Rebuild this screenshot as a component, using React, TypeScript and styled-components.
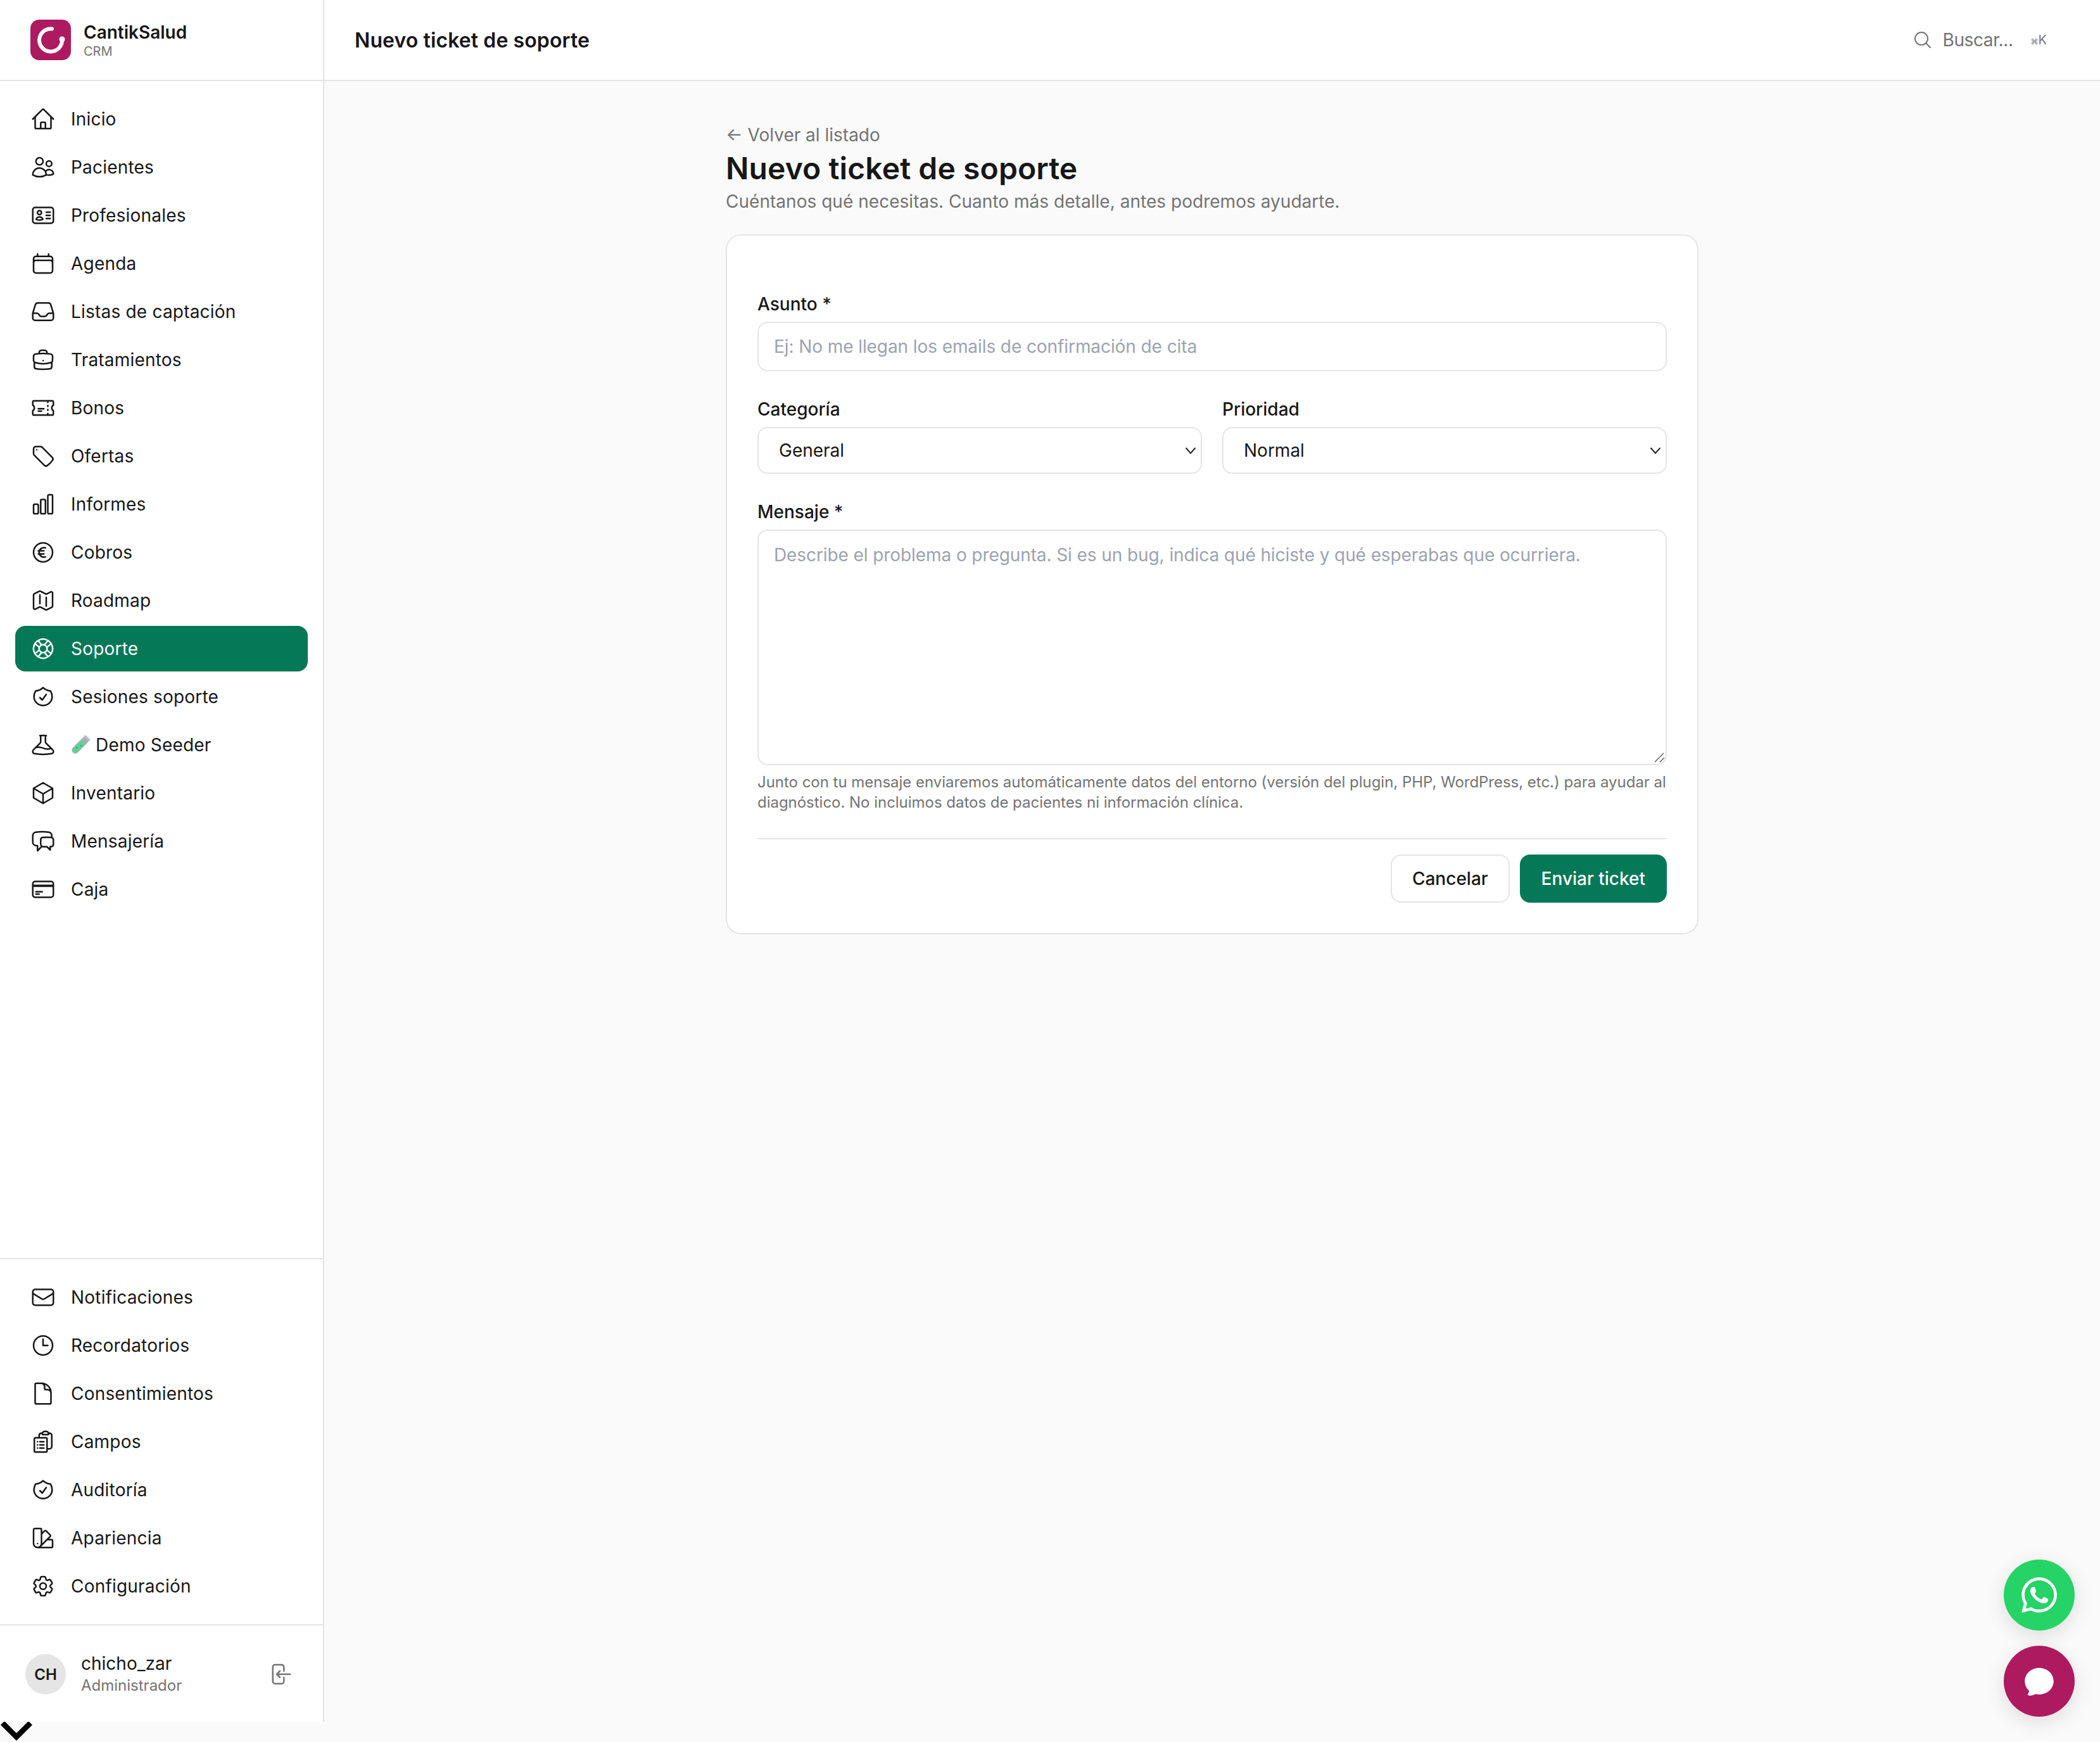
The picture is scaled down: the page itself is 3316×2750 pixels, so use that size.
import React from 'react';
import styled, { createGlobalStyle } from 'styled-components';
import {
  HiOutlineHome, HiOutlineUsers, HiOutlineIdentification, HiOutlineCalendar, HiOutlineInbox,
  HiOutlineBriefcase, HiOutlineTicket, HiOutlineTag, HiOutlineChartBar, HiOutlineCurrencyEuro,
  HiOutlineMap, HiOutlineLifebuoy, HiOutlineBeaker, HiOutlineCube,
  HiOutlineChatBubbleLeftRight, HiOutlineCreditCard, HiOutlineEnvelope, HiOutlineClock,
  HiOutlineDocument, HiOutlineClipboardDocumentList, HiOutlineSwatch, HiOutlineCog6Tooth,
  HiOutlineArrowLeftOnRectangle, HiOutlineMagnifyingGlass, HiChatBubbleOvalLeft,
} from 'react-icons/hi2';
import { FaWhatsapp } from 'react-icons/fa';

const GlobalStyle = createGlobalStyle`
  html, body { margin: 0; padding: 0; background: #fafafa; }
  * { box-sizing: border-box; }
  body { font-family: Inter, "Liberation Sans", sans-serif; color: #171717; }
`;

const Page = styled.div`
  width: 3316px;
  height: 2750px;
  overflow: hidden;
  display: flex;
  flex-direction: column;
`;

const Shell = styled.div`
  height: 2718px;
  display: flex;
`;

const BottomStrip = styled.div`
  height: 32px;
  display: flex;
  align-items: flex-start;
  svg { display: block; }
`;

const Sidebar = styled.aside`
  width: 512px;
  flex: none;
  display: flex;
  flex-direction: column;
  background: #fff;
  border-right: 2px solid #e5e5e5;
`;

const Brand = styled.div`
  height: 128px;
  flex: none;
  display: flex;
  align-items: center;
  gap: 20px;
  padding: 0 48px;
  border-bottom: 2px solid #e5e5e5;
`;

const BrandText = styled.div`
  display: flex;
  flex-direction: column;
`;

const BrandName = styled.span`
  font-size: 28px;
  line-height: 36px;
  font-weight: 600;
`;

const BrandSub = styled.span`
  font-size: 20px;
  line-height: 24px;
  color: #737373;
`;

const Nav = styled.nav<{ $grow?: boolean }>`
  display: flex;
  flex-direction: column;
  gap: 4px;
  padding: 24px;
  flex: ${({ $grow }) => ($grow ? 1 : 'none')};
`;

const SecondaryNav = styled(Nav)`
  border-top: 2px solid #e5e5e5;
`;

const NavItem = styled.a<{ $active?: boolean }>`
  height: 72px;
  display: flex;
  align-items: center;
  gap: 24px;
  padding: 0 24px;
  border-radius: 16px;
  font-size: 28px;
  letter-spacing: 0.2px;
  color: ${({ $active }) => ($active ? '#fff' : '#171717')};
  background: ${({ $active }) => ($active ? '#047857' : 'transparent')};
  svg { flex: none; }
`;

const NavLabel = styled.span`
  display: flex;
  align-items: center;
  gap: 9px;
`;

const UserBox = styled.div`
  flex: none;
  display: flex;
  align-items: center;
  gap: 24px;
  padding: 42px 48px 40px 40px;
  border-top: 2px solid #e5e5e5;
`;

const Avatar = styled.div`
  width: 64px;
  height: 64px;
  flex: none;
  border-radius: 50%;
  background: #e5e5e5;
  display: flex;
  align-items: center;
  justify-content: center;
  font-size: 24px;
  font-weight: 600;
`;

const UserInfo = styled.div`
  flex: 1;
  display: flex;
  flex-direction: column;
`;

const UserName = styled.span`
  font-size: 28px;
  line-height: 36px;
`;

const UserRole = styled.span`
  font-size: 24px;
  line-height: 34px;
  color: #737373;
`;

const LogoutButton = styled.button`
  border: none;
  background: none;
  padding: 0;
  color: #737373;
  display: flex;
`;

const Main = styled.main`
  flex: 1;
  display: flex;
  flex-direction: column;
  min-width: 0;
`;

const TopBar = styled.header`
  height: 128px;
  flex: none;
  display: flex;
  align-items: center;
  justify-content: space-between;
  padding: 0 84px 0 48px;
  background: #fff;
  border-bottom: 2px solid #e5e5e5;
`;

const TopTitle = styled.h1`
  margin: 0;
  font-size: 32px;
  font-weight: 600;
  letter-spacing: 0.1px;
`;

const Search = styled.div`
  display: flex;
  align-items: center;
  color: #737373;
  font-size: 28px;
  letter-spacing: -0.4px;
  gap: 16px;
`;

const Kbd = styled.kbd`
  font-family: Inter, sans-serif;
  font-size: 20px;
  letter-spacing: 0;
  margin-left: 12px;
`;

const KbdGlyph = styled.span`
  font-family: "DejaVu Sans", sans-serif;
  font-size: 12px;
`;

const Content = styled.div`
  width: 1536px;
  margin: 0 auto;
  padding-top: 64px;
`;

const BackLink = styled.a`
  display: block;
  font-size: 28px;
  line-height: 42px;
  color: #737373;
`;

const PageTitle = styled.h2`
  margin: 0;
  font-size: 48px;
  line-height: 64px;
  font-weight: 600;
  letter-spacing: 0.1px;
`;

const PageSub = styled.p`
  margin: 0 0 32px;
  font-size: 28px;
  line-height: 40px;
  letter-spacing: 0.03px;
  color: #737373;
`;

const Card = styled.form`
  background: #fff;
  border: 2px solid #e5e5e5;
  border-radius: 24px;
  padding: 88px 48px 48px;
  display: flex;
  flex-direction: column;
  gap: 40px;
`;

const Field = styled.div`
  display: flex;
  flex-direction: column;
  gap: 8px;
  min-width: 0;
`;

const Label = styled.label`
  font-size: 28px;
  line-height: 40px;
  font-weight: 500;
`;

const Row = styled.div`
  display: grid;
  grid-template-columns: 1fr 1fr;
  gap: 32px;
`;

const Input = styled.input`
  height: 78px;
  width: 100%;
  padding: 0 24px;
  border: 2px solid #e5e5e5;
  border-radius: 16px;
  background: #fff;
  font: 400 28px Inter, sans-serif;
  color: #171717;
  &::placeholder { color: #9ca3af; opacity: 1; letter-spacing: -0.085px; }
`;

const chevron = encodeURIComponent(
  '<svg xmlns="http://www.w3.org/2000/svg" width="20" height="20" viewBox="0 0 20 20" fill="none" stroke="#262626" stroke-width="2" stroke-linecap="round"><path d="M3 6.5l7 8 7-8"/></svg>',
);

const Select = styled.select`
  height: 74px;
  width: 100%;
  padding: 0 32px;
  appearance: none;
  border: 2px solid #e5e5e5;
  border-radius: 16px;
  font: 400 28px Inter, sans-serif;
  color: #171717;
  background: #fff url("data:image/svg+xml,${chevron}") no-repeat right 6px center;
`;

const TextAreaWrap = styled.div`
  position: relative;
`;

const TextArea = styled.textarea`
  display: block;
  height: 372px;
  width: 100%;
  padding: 18px 24px;
  border: 2px solid #e5e5e5;
  border-radius: 16px;
  background: #fff;
  font: 400 28px/40px Inter, sans-serif;
  color: #171717;
  resize: none;
  &::placeholder { color: #9ca3af; opacity: 1; letter-spacing: -0.09px; }
`;

const ResizeGrip = styled.svg`
  position: absolute;
  right: 2px;
  bottom: 4px;
  pointer-events: none;
`;

const Help = styled.p`
  margin: 11px 0 0;
  font-size: 24px;
  line-height: 32px;
  letter-spacing: -0.025px;
  color: #737373;
`;

const Actions = styled.div`
  display: flex;
  justify-content: flex-end;
  gap: 16px;
  padding-top: 24px;
  border-top: 2px solid #e5e5e5;
`;

const Button = styled.button<{ $primary?: boolean }>`
  height: 76px;
  padding: 0 32px;
  border-radius: 16px;
  font: 500 28px Inter, sans-serif;
  border: 2px solid ${({ $primary }) => ($primary ? '#047857' : '#e5e5e5')};
  background: ${({ $primary }) => ($primary ? '#047857' : '#fff')};
  color: ${({ $primary }) => ($primary ? '#fff' : '#171717')};
`;

const Floating = styled.div`
  position: fixed;
  right: 40px;
  bottom: 40px;
  display: flex;
  flex-direction: column;
  gap: 24px;
`;

const Fab = styled.button<{ $color: string }>`
  width: 112px;
  height: 112px;
  border: none;
  padding: 0;
  border-radius: 50%;
  display: flex;
  align-items: center;
  justify-content: center;
  color: #fff;
  background: ${({ $color }) => $color};
  box-shadow: 0 8px 32px rgba(0, 0, 0, 0.12);
`;

// heroicons' shield has a pointed bottom, this one is round like the app's
const ShieldBadge = ({ size }: { size: number }) => (
  <svg width={size} height={size} viewBox="0 0 24 24" fill="none" stroke="currentColor" strokeWidth="1.5" strokeLinecap="round" strokeLinejoin="round">
    <path d="M9 12.75 11.25 15 15 9.75" />
    <path d="M12 3.3c1.9 1.8 4.4 2.9 7.1 3.2.9 1.5 1.5 3.4 1.5 5.3 0 4.6-3.9 8.4-8.6 8.4s-8.6-3.8-8.6-8.4c0-1.9.6-3.8 1.5-5.3 2.7-.3 5.2-1.4 7.1-3.2Z" />
  </svg>
);

const primaryNav = [
  { icon: HiOutlineHome, label: 'Inicio' },
  { icon: HiOutlineUsers, label: 'Pacientes' },
  { icon: HiOutlineIdentification, label: 'Profesionales' },
  { icon: HiOutlineCalendar, label: 'Agenda' },
  { icon: HiOutlineInbox, label: 'Listas de captación' },
  { icon: HiOutlineBriefcase, label: 'Tratamientos' },
  { icon: HiOutlineTicket, label: 'Bonos' },
  { icon: HiOutlineTag, label: 'Ofertas' },
  { icon: HiOutlineChartBar, label: 'Informes' },
  { icon: HiOutlineCurrencyEuro, label: 'Cobros' },
  { icon: HiOutlineMap, label: 'Roadmap' },
  { icon: HiOutlineLifebuoy, label: 'Soporte', active: true },
  { icon: ShieldBadge, label: 'Sesiones soporte' },
  { icon: HiOutlineBeaker, label: 'Demo Seeder', tube: true },
  { icon: HiOutlineCube, label: 'Inventario' },
  { icon: HiOutlineChatBubbleLeftRight, label: 'Mensajería' },
  { icon: HiOutlineCreditCard, label: 'Caja' },
];

const secondaryNav = [
  { icon: HiOutlineEnvelope, label: 'Notificaciones' },
  { icon: HiOutlineClock, label: 'Recordatorios' },
  { icon: HiOutlineDocument, label: 'Consentimientos' },
  { icon: HiOutlineClipboardDocumentList, label: 'Campos' },
  { icon: ShieldBadge, label: 'Auditoría' },
  { icon: HiOutlineSwatch, label: 'Apariencia' },
  { icon: HiOutlineCog6Tooth, label: 'Configuración' },
];

const Logo = () => (
  <svg width="64" height="64" viewBox="0 0 64 64">
    <rect width="64" height="64" rx="14" fill="#ad1a5f" />
    <path d="M34 14.5A18 18 0 1 0 50 31" fill="none" stroke="#fff" strokeWidth="6" strokeLinecap="round" />
    <circle cx="50" cy="31" r="4.5" fill="#fff" />
  </svg>
);

const TestTube = () => (
  <svg width="30" height="30" viewBox="0 0 30 30">
    <g transform="rotate(45 15 15)">
      <rect x="9.5" y="-1" width="11" height="33" rx="5.5" fill="#a7adba" />
      <rect x="11" y="7" width="8" height="23.5" rx="4" fill="#5fd38d" />
      <rect x="8.5" y="-2" width="13" height="3.5" rx="1.5" fill="#b6c2d2" />
      <circle cx="14" cy="22" r="1.2" fill="#2f9e63" />
      <circle cx="16.5" cy="15" r="1.2" fill="#2f9e63" />
    </g>
  </svg>
);

export default function App() {
  return (
    <Page>
      <GlobalStyle />
      <Shell>
        <Sidebar>
          <Brand>
            <Logo />
            <BrandText>
              <BrandName>CantikSalud</BrandName>
              <BrandSub>CRM</BrandSub>
            </BrandText>
          </Brand>
          <Nav $grow>
            {primaryNav.map(({ icon: Icon, label, active, tube }) => (
              <NavItem key={label} $active={active}>
                <Icon size={40} />
                <NavLabel>{tube && <TestTube />}{label}</NavLabel>
              </NavItem>
            ))}
          </Nav>
          <SecondaryNav>
            {secondaryNav.map(({ icon: Icon, label }) => (
              <NavItem key={label}>
                <Icon size={40} />
                <NavLabel>{label}</NavLabel>
              </NavItem>
            ))}
          </SecondaryNav>
          <UserBox>
            <Avatar>CH</Avatar>
            <UserInfo>
              <UserName>chicho_zar</UserName>
              <UserRole>Administrador</UserRole>
            </UserInfo>
            <LogoutButton><HiOutlineArrowLeftOnRectangle size={40} /></LogoutButton>
          </UserBox>
        </Sidebar>
        <Main>
          <TopBar>
            <TopTitle>Nuevo ticket de soporte</TopTitle>
            <Search>
              <HiOutlineMagnifyingGlass size={32} />
              <span>Buscar...</span>
              <Kbd><KbdGlyph>⌘</KbdGlyph>K</Kbd>
            </Search>
          </TopBar>
          <Content>
            <BackLink>← Volver al listado</BackLink>
            <PageTitle>Nuevo ticket de soporte</PageTitle>
            <PageSub>Cuéntanos qué necesitas. Cuanto más detalle, antes podremos ayudarte.</PageSub>
            <Card>
              <Field>
                <Label>Asunto *</Label>
                <Input placeholder="Ej: No me llegan los emails de confirmación de cita" />
              </Field>
              <Row>
                <Field>
                  <Label>Categoría</Label>
                  <Select defaultValue="General"><option>General</option></Select>
                </Field>
                <Field>
                  <Label>Prioridad</Label>
                  <Select defaultValue="Normal"><option>Normal</option></Select>
                </Field>
              </Row>
              <Field>
                <Label>Mensaje *</Label>
                <div>
                  <TextAreaWrap>
                    <TextArea placeholder="Describe el problema o pregunta. Si es un bug, indica qué hiciste y qué esperabas que ocurriera." />
                    <ResizeGrip width="18" height="16" viewBox="0 0 18 16">
                      <path d="M1 15 15 1M9 15l7-7" fill="none" stroke="#6b6b6b" strokeWidth="1.6" />
                    </ResizeGrip>
                  </TextAreaWrap>
                  <Help>Junto con tu mensaje enviaremos automáticamente datos del entorno (versión del plugin, PHP, WordPress, etc.) para ayudar al diagnóstico. No incluimos datos de pacientes ni información clínica.</Help>
                </div>
              </Field>
              <Actions>
                <Button type="button">Cancelar</Button>
                <Button type="button" $primary>Enviar ticket</Button>
              </Actions>
            </Card>
          </Content>
        </Main>
      </Shell>
      <BottomStrip>
        <svg width="52" height="32" viewBox="0 0 52 32">
          <path d="M4 2l22 22L48 2" fill="none" stroke="#000" strokeWidth="8.5" />
        </svg>
      </BottomStrip>
      <Floating>
        <Fab $color="#25d366"><FaWhatsapp size={64} /></Fab>
        <Fab $color="#ad1a5f"><HiChatBubbleOvalLeft size={56} /></Fab>
      </Floating>
    </Page>
  );
}
